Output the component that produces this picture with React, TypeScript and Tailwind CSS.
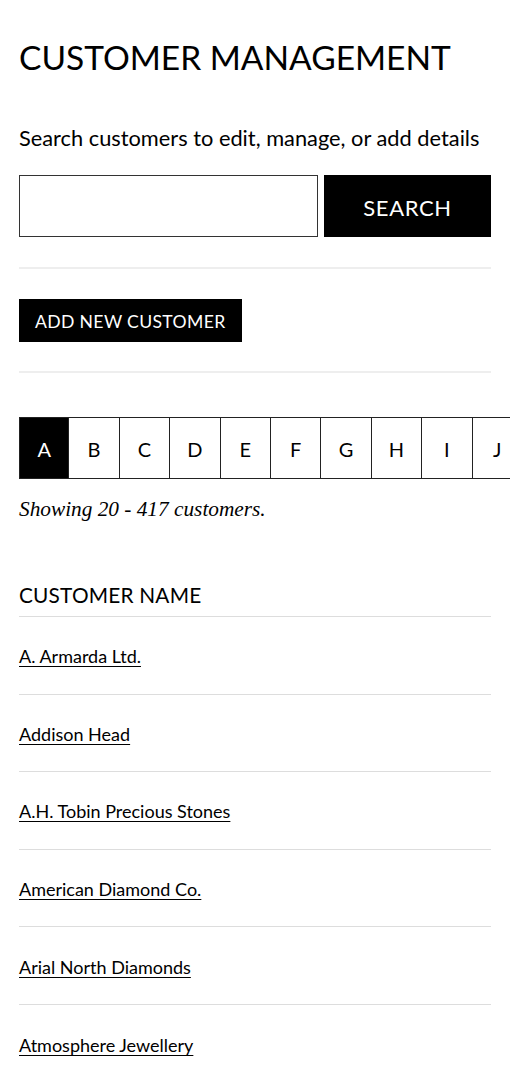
import React, { useState } from 'react';

const font = { fontFamily: '"Lato", "Liberation Sans", sans-serif' };

const letters = ['A', 'B', 'C', 'D', 'E', 'F', 'G', 'H', 'I', 'J', 'K', 'L', 'M', 'N', 'O', 'P', 'Q', 'R', 'S', 'T', 'U', 'V', 'W', 'X', 'Y', 'Z'];

const customers = [
  'A. Armarda Ltd.',
  'Addison Head',
  'A.H. Tobin Precious Stones',
  'American Diamond Co.',
  'Arial North Diamonds',
  'Atmosphere Jewellery',
];

export default function App() {
  const [query, setQuery] = useState('');
  const [active, setActive] = useState('A');

  return (
    <div className="min-h-screen w-[510px] overflow-hidden bg-white text-black" style={font}>
      <div className="pl-[19px] pr-[19px] pt-[37px]">
        <h1 className="text-[33.5px] leading-[40px] font-normal">CUSTOMER MANAGEMENT</h1>

        <p className="mt-[47px] text-[21.8px] leading-[28px]">Search customers to edit, manage, or add details</p>

        <form className="mt-[23px] flex gap-[6px]" onSubmit={(e) => e.preventDefault()}>
          <input
            value={query}
            onChange={(e) => setQuery(e.target.value)}
            className="h-[62px] w-[299px] border border-[#333] px-3 text-[20px] outline-none"
          />
          <button type="submit" className="h-[62px] flex-1 bg-black pt-[2px] text-[22px] tracking-[0.03em] text-white">
            SEARCH
          </button>
        </form>

        <div className="mt-[30px] border-t-2 border-[#eeeeee]" />

        <button type="button" className="mt-[30px] h-[43px] bg-black px-[16px] pt-[4px] text-[17.6px] tracking-[0.02em] text-white">
          ADD NEW CUSTOMER
        </button>

        <div className="mt-[29px] border-t-2 border-[#eeeeee]" />
      </div>

      {/* letter index, scrolls sideways on small screens */}
      <div className="mt-[44px] flex overflow-x-auto pl-[19px] [scrollbar-width:none]">
        {letters.map((l, i) => (
          <button
            key={l}
            type="button"
            onClick={() => setActive(l)}
            className={`flex h-[62px] w-[50.4px] shrink-0 items-center justify-center border-y-[1.5px] border-r-[1.5px] border-[#222] pt-[1px] text-[20px] ${
              i === 0 ? 'border-l-[1.5px]' : ''
            } ${active === l ? 'bg-black text-white' : 'bg-white text-black'}`}
          >
            {l}
          </button>
        ))}
      </div>

      <div className="pl-[19px] pr-[19px]">
        <p className="mt-[15px] text-[21.3px] italic leading-[30px]" style={{ fontFamily: '"Liberation Serif", serif' }}>
          Showing 20 - 417 customers.
        </p>

        <div className="mt-[57px] border-b border-[#dddddd] pb-[7px] text-[20.8px] leading-[28px] tracking-[0.01em]">CUSTOMER NAME</div>

        <ul>
          {customers.map((c) => (
            <li key={c} className="flex h-[77.6px] items-center border-b border-[#dddddd] pt-[2px] last:border-b-0">
              <a href="#" className="text-[18px] leading-[24px] underline decoration-1 underline-offset-[3px]">
                {c}
              </a>
            </li>
          ))}
        </ul>
      </div>
    </div>
  );
}
